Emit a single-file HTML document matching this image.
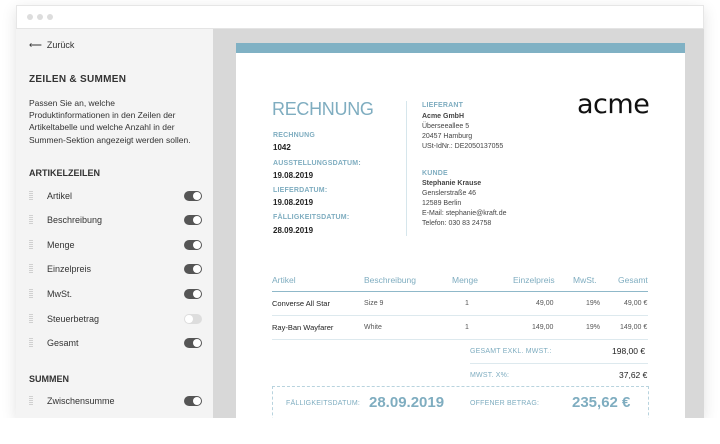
<!DOCTYPE html>
<html><head><meta charset="utf-8"><style>
*{margin:0;padding:0;box-sizing:border-box}
body{width:720px;height:444px;background:#fff;font-family:"Liberation Sans",sans-serif;position:relative;overflow:hidden}
.a{position:absolute;white-space:nowrap}
.win{position:absolute;left:16px;top:5px;width:688px;height:413px;background:#fff;box-shadow:0 4px 14px rgba(0,0,0,.12);border:1px solid #e6e6e6}
.side{position:absolute;left:16px;top:28px;width:197px;height:390px;background:#f4f4f4;border-top:1px solid #e4e4e4}
.gray{position:absolute;left:213px;top:28px;width:491px;height:390px;background:#d8d8d8;border-top:1px solid #e4e4e4}
.paper{position:absolute;left:236px;top:43px;width:449px;height:375px;background:#fff}
.bar{position:absolute;left:236px;top:43px;width:449px;height:10px;background:#80b1c4}
.dot{position:absolute;top:14px;width:6px;height:6px;border-radius:50%;background:#ddd}
.t{font-size:9px;color:#333}
.tg{position:absolute;left:184px;width:18px;height:10px;border-radius:5px;background:#555}
.tg::after{content:"";position:absolute;right:1px;top:1px;width:8px;height:8px;border-radius:50%;background:#fff}
.tg.off{background:#ddd}.tg.off::after{left:1px;right:auto}
.grip{position:absolute;left:29px;width:4px;height:10px;background:repeating-linear-gradient(#d0d0d0 0 1px,transparent 1px 2px)}
.bl{color:#7fadc0}
.lb{font-size:7px;color:#7fadc0;font-weight:bold;letter-spacing:.2px}
.v{font-size:8px;color:#222;font-weight:bold}
.s{font-size:7px;color:#555}
.th{font-size:8.5px;color:#7fadc0}
.hr{position:absolute;height:1px;background:#dde9ee}
</style></head><body>
<div class="win"></div>
<div class="dot" style="left:27px"></div><div class="dot" style="left:37px"></div><div class="dot" style="left:47px"></div>
<div class="side"></div><div class="gray"></div><div class="paper"></div><div class="bar"></div>

<div class="a t" style="left:29px;top:40px">⟵&nbsp; Zurück</div>
<div class="a" style="left:29px;top:74px;font-size:10px;color:#333;font-weight:bold;letter-spacing:.3px">ZEILEN &amp; SUMMEN</div>
<div class="a t" style="left:29px;top:97px;line-height:12.2px;font-size:8.5px">Passen Sie an, welche<br>Produktinformationen in den Zeilen der<br>Artikeltabelle und welche Anzahl in der<br>Summen-Sektion angezeigt werden sollen.</div>
<div class="a" style="left:29px;top:168px;font-size:9px;color:#333;font-weight:bold">ARTIKELZEILEN</div>
<div class="grip" style="top:191px"></div><div class="a t" style="left:47px;top:191px">Artikel</div><div class="tg" style="top:191px"></div>
<div class="grip" style="top:215px"></div><div class="a t" style="left:47px;top:215px">Beschreibung</div><div class="tg" style="top:215px"></div>
<div class="grip" style="top:240px"></div><div class="a t" style="left:47px;top:240px">Menge</div><div class="tg" style="top:240px"></div>
<div class="grip" style="top:264px"></div><div class="a t" style="left:47px;top:264px">Einzelpreis</div><div class="tg" style="top:264px"></div>
<div class="grip" style="top:289px"></div><div class="a t" style="left:47px;top:289px">MwSt.</div><div class="tg" style="top:289px"></div>
<div class="grip" style="top:314px"></div><div class="a t" style="left:47px;top:314px">Steuerbetrag</div><div class="tg off" style="top:314px"></div>
<div class="grip" style="top:338px"></div><div class="a t" style="left:47px;top:338px">Gesamt</div><div class="tg" style="top:338px"></div>
<div class="a" style="left:29px;top:374px;font-size:9px;color:#333;font-weight:bold">SUMMEN</div>
<div class="grip" style="top:396px"></div><div class="a t" style="left:47px;top:396px">Zwischensumme</div><div class="tg" style="top:396px"></div>

<div class="a bl" style="left:272px;top:99px;font-size:18px;letter-spacing:-.3px">RECHNUNG</div>
<div class="a lb" style="left:273px;top:132px">RECHNUNG</div><div class="a v" style="left:273px;top:143px">1042</div>
<div class="a lb" style="left:273px;top:160px">AUSSTELLUNGSDATUM:</div><div class="a v" style="left:273px;top:171px">19.08.2019</div>
<div class="a lb" style="left:273px;top:187px">LIEFERDATUM:</div><div class="a v" style="left:273px;top:198px">19.08.2019</div>
<div class="a lb" style="left:273px;top:214px">FÄLLIGKEITSDATUM:</div><div class="a v" style="left:273px;top:226px">28.09.2019</div>
<div class="a" style="left:406px;top:101px;width:1px;height:135px;background:#d6e6ec"></div>
<div class="a lb" style="left:422px;top:102px">LIEFERANT</div>
<div class="a" style="left:422px;top:112px;font-size:7px;color:#444;line-height:10px"><b>Acme GmbH</b><br>Überseeallee 5<br>20457 Hamburg<br>USt-IdNr.: DE2050137055</div>
<div class="a lb" style="left:422px;top:170px">KUNDE</div>
<div class="a" style="left:422px;top:179px;font-size:7px;color:#444;line-height:10px"><b>Stephanie Krause</b><br>Genslerstraße 46<br>12589 Berlin<br>E-Mail: stephanie@kraft.de<br>Telefon: 030 83 24758</div>
<div class="a" style="left:577px;top:89px;font-size:27px;font-family:'DejaVu Sans',sans-serif;color:#111;letter-spacing:-0.5px">acme</div>

<div class="a th" style="left:272px;top:275px">Artikel</div>
<div class="a th" style="left:364px;top:275px">Beschreibung</div>
<div class="a th" style="left:452px;top:275px">Menge</div>
<div class="a th" style="left:513px;top:275px">Einzelpreis</div>
<div class="a th" style="left:573px;top:275px">MwSt.</div>
<div class="a th" style="left:618px;top:275px">Gesamt</div>
<div class="hr" style="left:272px;top:291px;width:376px;background:#8fb8c9"></div>
<div class="a" style="left:272px;top:299px;font-size:7.5px;color:#222">Converse All Star</div>
<div class="a s" style="left:364px;top:300px">Size 9</div>
<div class="a s" style="left:465px;top:300px">1</div>
<div class="a s" style="left:536px;top:300px">49,00</div>
<div class="a s" style="left:586px;top:300px">19%</div>
<div class="a s" style="left:624px;top:300px">49,00 €</div>
<div class="hr" style="left:272px;top:315px;width:376px"></div>
<div class="a" style="left:272px;top:323px;font-size:7.5px;color:#222">Ray-Ban Wayfarer</div>
<div class="a s" style="left:364px;top:324px">White</div>
<div class="a s" style="left:465px;top:324px">1</div>
<div class="a s" style="left:532px;top:324px">149,00</div>
<div class="a s" style="left:586px;top:324px">19%</div>
<div class="a s" style="left:620px;top:324px">149,00 €</div>
<div class="hr" style="left:272px;top:339px;width:376px"></div>
<div class="a lb" style="left:470px;top:348px;font-weight:normal">GESAMT EXKL. MWST.:</div>
<div class="a" style="left:612px;top:346px;font-size:8.5px;color:#222">198,00 €</div>
<div class="hr" style="left:470px;top:363px;width:178px"></div>
<div class="a lb" style="left:470px;top:372px;font-weight:normal">MWST. X%:</div>
<div class="a" style="left:619px;top:370px;font-size:8.5px;color:#222">37,62 €</div>
<div class="a" style="left:272px;top:386px;width:377px;height:40px;border:1px dashed #b8d3de"></div>
<div class="a lb" style="left:286px;top:400px;font-weight:normal">FÄLLIGKEITSDATUM:</div>
<div class="a bl" style="left:369px;top:394px;font-size:15px;font-weight:bold">28.09.2019</div>
<div class="a lb" style="left:470px;top:400px;font-weight:normal">OFFENER BETRAG:</div>
<div class="a bl" style="left:572px;top:394px;font-size:15px;font-weight:bold">235,62 €</div>
<div class="a" style="left:0;top:418px;width:720px;height:26px;background:#fff"></div>
</body></html>
